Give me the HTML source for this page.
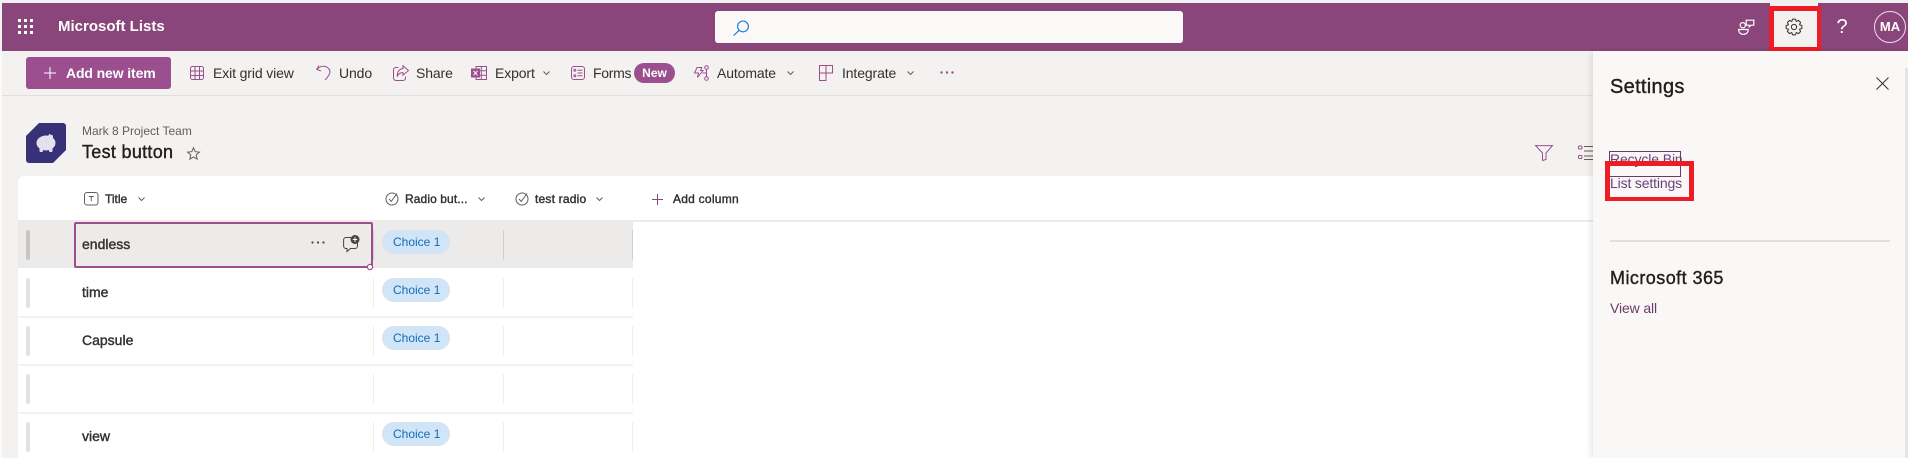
<!DOCTYPE html>
<html><head><meta charset="utf-8"><style>
html,body{margin:0;padding:0}
body{width:1908px;height:458px;position:relative;overflow:hidden;background:#f3f2f1;font-family:"Liberation Sans",sans-serif;color:#323130}
.a{position:absolute}
.t{position:absolute;white-space:nowrap;line-height:20px;font-size:14px;color:#323130}
.k{letter-spacing:-.12px}
.s{-webkit-text-stroke:.4px currentColor}
svg{position:absolute;overflow:visible}
.tb{fill:none;stroke:#9b4f8e;stroke-width:1}
.h{font-size:12px;-webkit-text-stroke:.4px #323130;top:189px}
.ch{fill:none;stroke:#605e5c;stroke-width:1}
.hd{position:absolute;left:26px;width:4px;height:30px;border-radius:2px;background:#e4e2e0}
.v{position:absolute;width:1px;height:30px;background:#f0efee}
.p{position:absolute;left:382px;width:68px;height:24px;border-radius:12px;background:#d1e5f6;color:#0f6cbd;font-size:12px;line-height:25px;text-align:left;text-indent:11px}
.sp{position:absolute;left:18px;width:615px;height:2px;background:#f3f2f1}
.r{position:absolute;background:#ee1c25}
</style></head><body>
<div class="a" style="left:0;top:0;width:1908px;height:3px;background:#f0f0f0"></div>
<div class="a" style="left:2px;top:3px;width:1906px;height:48px;background:#8a467b"></div>
<div class="a" style="left:0;top:51px;width:2px;height:407px;background:#fafafa"></div>

<svg style="left:0;top:0" width="60" height="51" fill="#fff"><g>
<rect x="18" y="19" width="3" height="3"/><rect x="24" y="19" width="3" height="3"/><rect x="30" y="19" width="3" height="3"/>
<rect x="18" y="25" width="3" height="3"/><rect x="24" y="25" width="3" height="3"/><rect x="30" y="25" width="3" height="3"/>
<rect x="18" y="31" width="3" height="3"/><rect x="24" y="31" width="3" height="3"/><rect x="30" y="31" width="3" height="3"/></g></svg>
<div class="t" style="left:58px;top:17px;font-size:15px;font-weight:bold;color:#fff">Microsoft Lists</div>

<div class="a" style="left:715px;top:11px;width:468px;height:32px;background:#faf9f8;border-radius:3px"></div>
<svg style="left:733px;top:20px" width="16" height="16" fill="none" stroke="#0f78d4" stroke-width="1.1"><circle cx="10" cy="6.4" r="5.4"/><path d="M6.2 10.2L.6 15.6"/></svg>

<!-- header right -->
<svg style="left:1738px;top:19px" width="17" height="16" fill="none" stroke="#fff" stroke-width="1.2"><circle cx="4.8" cy="6.2" r="2.6"/><path d="M8.2 1.2h7.6v5h-2.6l-2 1.6V6.2H8.2z"/><path d="M.6 10.5h9.6c0 3-2 4.8-4.8 4.8S.6 13.5.6 10.5z"/></svg>
<div class="a" style="left:1770px;top:3px;width:48px;height:3px;background:#f3f2f1"></div>
<div class="a" style="left:1769px;top:6px;width:52px;height:45px;background:#f3f2f1"></div>
<svg style="left:1786px;top:19px" width="16" height="16" fill="none" stroke="#323130" stroke-width="1" stroke-linejoin="round"><g transform="translate(8 8)"><path id="x" d="M5.36-2.22L7.85-1.53V1.53L5.36 2.22"/><path transform="rotate(45)" d="M5.36-2.22L7.85-1.53V1.53L5.36 2.22"/><path transform="rotate(90)" d="M5.36-2.22L7.85-1.53V1.53L5.36 2.22"/><path transform="rotate(135)" d="M5.36-2.22L7.85-1.53V1.53L5.36 2.22"/><path transform="rotate(180)" d="M5.36-2.22L7.85-1.53V1.53L5.36 2.22"/><path transform="rotate(225)" d="M5.36-2.22L7.85-1.53V1.53L5.36 2.22"/><path transform="rotate(270)" d="M5.36-2.22L7.85-1.53V1.53L5.36 2.22"/><path transform="rotate(315)" d="M5.36-2.22L7.85-1.53V1.53L5.36 2.22"/><circle r="2.6"/></g></svg>
<div class="r" style="left:1769px;top:6px;width:52px;height:5px"></div>
<div class="r" style="left:1769px;top:47px;width:52px;height:4px"></div>
<div class="r" style="left:1769px;top:6px;width:5px;height:45px"></div>
<div class="r" style="left:1817px;top:6px;width:4px;height:45px"></div>
<div class="t" style="left:1835px;top:17px;font-size:20px;color:#fff;width:14px;text-align:center">?</div>
<div class="a" style="left:1874px;top:11px;width:30px;height:30px;border:1px solid #eadfe8;border-radius:50%;color:#fff;font-size:13px;font-weight:bold;text-align:center;line-height:30px">MA</div>

<!-- toolbar -->
<div class="a" style="left:2px;top:95px;width:1592px;height:1px;background:#e1dfdd"></div>
<div class="a" style="left:26px;top:57px;width:145px;height:32px;background:#9b4f8e;border-radius:3px"></div>
<svg style="left:44px;top:67px" width="12" height="12" stroke="#fff" stroke-width="1" fill="none"><path d="M6 0v12M0 6h12"/></svg>
<div class="t k" style="left:66px;top:63px;font-weight:bold;color:#fff">Add new item</div>

<svg style="left:190px;top:66px" width="14" height="14" class="tb"><rect x=".5" y=".5" width="13" height="13" rx="2"/><path d="M.5 5h13M.5 9.5h13M5 .5v13M9.5 .5v13"/></svg>
<div class="t k" style="left:213px;top:63px">Exit grid view</div>
<svg style="left:316px;top:65px" width="15" height="16" class="tb"><path d="M3 .5L.7 4.4 5 6M.9 4.4C3 2.2 5.5 1.1 8 1.3c3.5.3 6 3 6 5.6 0 3-2.5 5-5 8.2"/></svg>
<div class="t k" style="left:339px;top:63px">Undo</div>
<svg style="left:393px;top:65px" width="16" height="16" class="tb"><path d="M5.5 2.5H3A2.5 2.5 0 0 0 .5 5v8A2.5 2.5 0 0 0 3 15.5h7a2.5 2.5 0 0 0 2.5-2.5v-1.5"/><path d="M10 .8l5.5 4.7-5.5 4.7V7.6C7.5 7.5 5.5 8.5 4.2 11.5c0-4.5 2-7.5 5.8-8z"/></svg>
<div class="t k" style="left:416px;top:63px">Share</div>
<svg style="left:471px;top:66px" width="16" height="14"><rect x="5" y=".5" width="10.5" height="13" fill="none" stroke="#9b4f8e"/><path d="M5 4.8h10.5M5 9.2h10.5M10.3.5v13" stroke="#9b4f8e" fill="none"/><rect x="0" y="2.5" width="9" height="9" fill="#9b4f8e"/><path d="M2.5 4.8l4 4.5M6.5 4.8l-4 4.5" stroke="#fff" stroke-width="1"/></svg>
<div class="t k" style="left:495px;top:63px">Export</div>
<svg style="left:543px;top:71px" width="7" height="5" class="ch"><path d="M.5 .5L3.5 3.5 6.5 .5"/></svg>
<svg style="left:571px;top:66px" width="14" height="14" class="tb"><rect x=".5" y=".5" width="13" height="13" rx="2.5"/><circle cx="3.8" cy="4.3" r="1"/><circle cx="3.8" cy="9.7" r="1"/><path d="M6.5 4.3h5M6.5 7h5M6.5 9.7h5"/></svg>
<div class="t k" style="left:593px;top:63px;letter-spacing:-.3px">Forms</div>
<div class="a" style="left:634px;top:63px;width:41px;height:20px;border-radius:10px;background:#9b4f8e;color:#fff;font-size:12px;font-weight:bold;text-align:center;line-height:20px">New</div>
<svg style="left:693px;top:65px" width="17" height="16" class="tb"><path d="M4 2.5H8.8L7.5 5.5H10L4.5 12.5 5.500 8H1.5z"/><circle cx="13.5" cy="2.5" r="1.8"/><circle cx="13.5" cy="13.5" r="1.8"/><path d="M13.5 4.3v7.4M9.5 8h4"/></svg>
<div class="t k" style="left:717px;top:63px">Automate</div>
<svg style="left:787px;top:71px" width="7" height="5" class="ch"><path d="M.5 .5L3.5 3.5 6.5 .5"/></svg>
<svg style="left:819px;top:65px" width="14" height="16" class="tb"><path d="M.5 .5h13v7.5H7v7.5H.5zM7 .5v7.5M.5 8H7"/></svg>
<div class="t k" style="left:842px;top:63px">Integrate</div>
<svg style="left:907px;top:71px" width="7" height="5" class="ch"><path d="M.5 .5L3.5 3.5 6.5 .5"/></svg>
<svg style="left:940px;top:71px" width="14" height="4" fill="#9b4f8e"><circle cx="1.5" cy="1.5" r="1.2"/><circle cx="7" cy="1.5" r="1.2"/><circle cx="12.5" cy="1.5" r="1.2"/></svg>

<!-- list title -->
<svg style="left:26px;top:123px" width="40" height="40"><path d="M13 0H37a3 3 0 0 1 3 3V27L27 40H3a3 3 0 0 1-3-3V13z" fill="#373277"/><g fill="#e3e1ef"><ellipse cx="20" cy="20" rx="9.5" ry="7.5"/><path d="M23 11l4 1.500v5h-6z"/><rect x="13.5" y="25" width="3.500" height="4" rx="1"/><rect x="23" y="25" width="3.500" height="4" rx="1"/></g></svg>
<div class="t" style="left:82px;top:121px;font-size:12px;color:#605e5c">Mark 8 Project Team</div>
<div class="t s" style="left:82px;top:142px;font-size:18px;color:#201f1e;letter-spacing:.3px">Test button</div>
<svg style="left:187px;top:147px" width="13" height="13" fill="none" stroke="#605e5c" stroke-width="1"><path d="M6.5 .8L8.2 4.7l4.2.4-3.2 2.8.9 4.200-3.600-2.200-3.600 2.200.9-4.200L.6 5.100l4.200-.4z"/></svg>
<svg style="left:1535px;top:145px" width="18" height="16" class="tb"><path d="M.6 .6H17.4L11 8v6.5L7.5 15.500V8z"/></svg>
<svg style="left:1578px;top:145px" width="16" height="15" class="tb"><rect x=".5" y="1" width="3.500" height="3" rx="1"/><rect x=".5" y="10.500" width="3.500" height="3" rx="1"/><path d="M6 1.500h10M6 6h10M6 11h10M6 14.500h10" stroke="#605e5c"/></svg>

<!-- grid card -->
<div class="a" style="left:18px;top:176px;width:1576px;height:282px;background:#fff;border-radius:6px 0 0 0"></div>
<div class="a" style="left:18px;top:220px;width:1576px;height:2px;background:#edebe9"></div>
<svg style="left:84px;top:192px" width="15" height="14" fill="none" stroke="#605e5c"><rect x=".5" y=".5" width="13.500" height="12.500" rx="2.500"/><path d="M4.800 4.500h5M7.300 4.500v4.500"/></svg>
<div class="t h" style="left:105px">Title</div>
<svg style="left:138px;top:197px" width="7" height="5" class="ch"><path d="M.5 .5L3.500 3.500 6.500 .5"/></svg>
<svg style="left:385px;top:192px" width="14" height="14" fill="none" stroke="#605e5c"><circle cx="7" cy="7" r="6"/><path d="M4 7l2.200 2.500L12 1.500"/></svg>
<div class="t h" style="left:405px;letter-spacing:.1px">Radio but...</div>
<svg style="left:478px;top:197px" width="7" height="5" class="ch"><path d="M.5 .5L3.500 3.500 6.500 .5"/></svg>
<svg style="left:515px;top:192px" width="14" height="14" fill="none" stroke="#605e5c"><circle cx="7" cy="7" r="6"/><path d="M4 7l2.200 2.500L12 1.500"/></svg>
<div class="t h" style="left:535px;letter-spacing:.2px">test radio</div>
<svg style="left:596px;top:197px" width="7" height="5" class="ch"><path d="M.5 .5L3.500 3.500 6.500 .5"/></svg>
<svg style="left:652px;top:194px" width="11" height="11" fill="none" stroke="#8a467b"><path d="M5.500 0v11M0 5.500h11"/></svg>
<div class="t h" style="left:673px;letter-spacing:.25px">Add column</div>

<div class="a" style="left:18px;top:220px;width:615px;height:48px;background:#edebe9"></div>
<div class="sp" style="top:316px"></div><div class="sp" style="top:364px"></div><div class="sp" style="top:412px"></div>
<div class="hd" style="top:230px;background:#c8c6c4"></div>
<div class="hd" style="top:278px"></div><div class="hd" style="top:326px"></div><div class="hd" style="top:374px"></div><div class="hd" style="top:422px"></div>

<div class="v" style="left:503px;top:230px;background:#d2d0ce"></div><div class="v" style="left:632px;top:230px;background:#d2d0ce"></div><div class="v" style="left:373px;top:230px;background:#d2d0ce"></div>
<div class="v" style="left:373px;top:278px"></div><div class="v" style="left:503px;top:278px"></div><div class="v" style="left:632px;top:278px"></div>
<div class="v" style="left:373px;top:326px"></div><div class="v" style="left:503px;top:326px"></div><div class="v" style="left:632px;top:326px"></div>
<div class="v" style="left:373px;top:374px"></div><div class="v" style="left:503px;top:374px"></div><div class="v" style="left:632px;top:374px"></div>
<div class="v" style="left:373px;top:422px"></div><div class="v" style="left:503px;top:422px"></div><div class="v" style="left:632px;top:422px"></div>

<div class="a" style="left:74px;top:222px;width:295px;height:42px;border:2px solid #9b4f8e;border-radius:2px"></div>
<svg style="left:366px;top:263px" width="8" height="8"><circle cx="4" cy="4" r="2.600" fill="#fff" stroke="#9b4f8e" stroke-width="1.200"/></svg>
<div class="t s" style="left:82px;top:234px">endless</div>
<svg style="left:311px;top:241px" width="14" height="4" fill="#484644"><circle cx="1.500" cy="1.500" r="1.100"/><circle cx="7" cy="1.500" r="1.100"/><circle cx="12.500" cy="1.500" r="1.100"/></svg>
<svg style="left:343px;top:235px" width="17" height="17"><path d="M8 2.500H3A2.500 2.500 0 0 0 .6 5v6A2.500 2.500 0 0 0 3 13.500h1v3l3.500-3H12A2.500 2.500 0 0 0 14.500 11V8" fill="none" stroke="#484644"/><circle cx="12" cy="4.500" r="4.500" fill="#484644"/><path d="M12 2.300v4.400M9.800 4.500h4.400" stroke="#fff"/></svg>
<div class="t s" style="left:82px;top:282px">time</div>
<div class="t s" style="left:82px;top:330px">Capsule</div>
<div class="t s" style="left:82px;top:426px">view</div>
<div class="p" style="top:230px">Choice 1</div>
<div class="p" style="top:278px">Choice 1</div>
<div class="p" style="top:326px">Choice 1</div>
<div class="p" style="top:422px">Choice 1</div>

<!-- settings panel -->
<div class="a" style="left:1593px;top:51px;width:315px;height:407px;background:#faf8f7;box-shadow:-2px 0 6px rgba(0,0,0,.10)"></div>
<div class="a" style="left:1905px;top:68px;width:3px;height:390px;background:#e6e5e4"></div>
<div class="t s" style="left:1610px;top:77px;font-size:20px;color:#201f1e;letter-spacing:.3px">Settings</div>
<svg style="left:1876px;top:77px" width="13" height="13" fill="none" stroke="#323130"><path d="M.5 .5l12 12M12.500 .5l-12 12"/></svg>
<div class="t k" style="left:1610px;top:149px;color:#6a3f7d">Recycle Bin</div>
<div class="a" style="left:1609px;top:151px;width:70px;height:24px;border:1px solid #6d3a68"></div>
<div class="t" style="left:1610px;top:173px;color:#6a3f7d;letter-spacing:-.15px">List settings</div>
<div class="r" style="left:1605px;top:161px;width:89px;height:5px"></div>
<div class="r" style="left:1605px;top:197px;width:89px;height:4px"></div>
<div class="r" style="left:1605px;top:161px;width:5px;height:40px"></div>
<div class="r" style="left:1689px;top:161px;width:5px;height:40px"></div>
<div class="a" style="left:1610px;top:240px;width:280px;height:2px;background:#e1dfdd"></div>
<div class="t s" style="left:1610px;top:268px;font-size:18px;color:#201f1e;letter-spacing:.45px">Microsoft 365</div>
<div class="t k" style="left:1610px;top:298px;color:#6b3a68">View all</div>
</body></html>
